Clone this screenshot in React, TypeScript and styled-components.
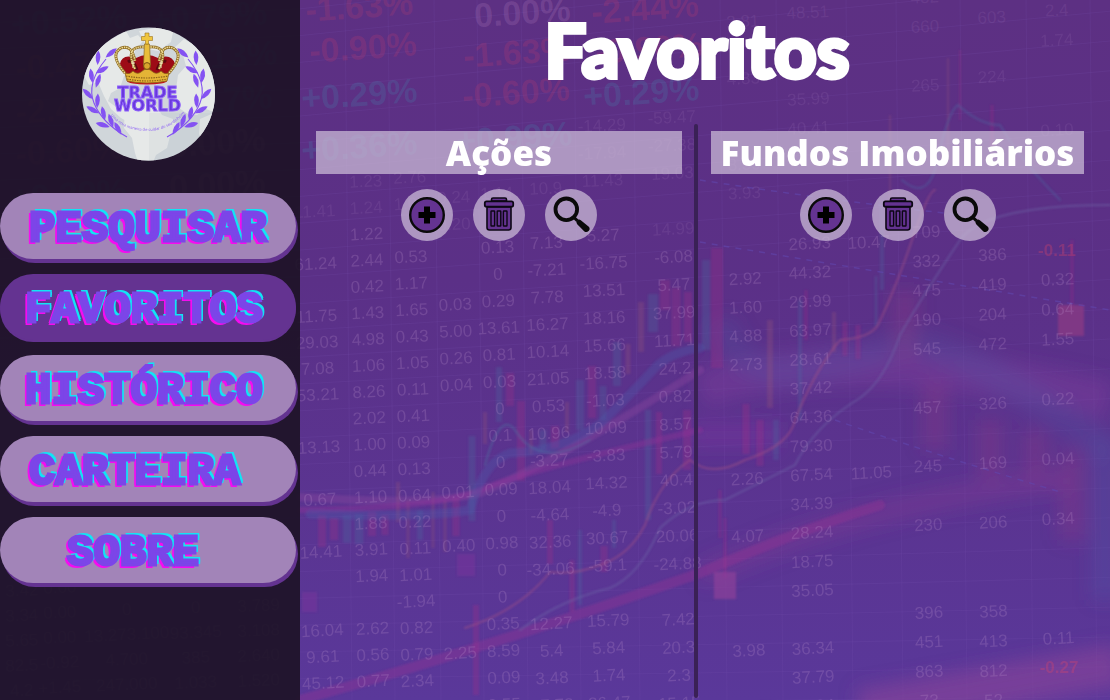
import React from 'react';
import styled, { createGlobalStyle, css } from 'styled-components';

const colors = {
  night: '#22152c',
  violet: '#643391',
  lilac: '#a284b8',
  label: '#7c45e8',
  leaf: '#8452f2',
};

const GlobalStyle = createGlobalStyle`
  *, *::before, *::after { box-sizing: border-box; }
  html, body, #root { min-height: 100%; }
  body {
    margin: 0;
    background: ${colors.night};
    color: #fff;
    font-family: "Open Sans", "Liberation Sans", sans-serif;
  }
`;

const Page = styled.div`
  position: relative;
  isolation: isolate;
  display: flex;
  min-height: 100vh;
  overflow: hidden;
`;

const BackdropSvg = styled.svg`
  position: absolute;
  inset: 0;
  z-index: -1;
  width: 100%;
  height: 100%;
  font-family: "Liberation Sans", Arial, sans-serif;
`;

const Sidebar = styled.aside`
  flex: 0 0 300px;
  display: flex;
  flex-direction: column;
  align-items: flex-start;
  padding-top: 27px;
  background: rgba(28, 18, 35, 0.9);
`;

const LogoLink = styled.a`
  align-self: center;
  display: block;
  height: 134px;
  margin-right: 3px;
`;

const Nav = styled.nav`
  display: flex;
  flex-direction: column;
  gap: 15px;
  width: 296px;
  margin-top: 32px;
`;

const NavButton = styled.button<{ $active?: boolean; $indent?: number }>`
  height: 66px;
  padding: 6px 0 0 ${({ $indent = 29 }) => $indent}px;
  border: 0;
  border-radius: 33px;
  background: ${colors.lilac};
  box-shadow: 2px 4px 0 ${colors.violet};
  color: ${colors.label};
  font: 700 44px/60px "Liberation Mono", monospace;
  text-align: left;
  white-space: nowrap;
  cursor: pointer;
  -webkit-text-stroke: 3px ${colors.label};
  text-shadow: 3px -3px 0 #12e4f5, 3px -1px 0 #12e4f5, -3px 3px 0 #f50cf0, -3px 1px 0 #f50cf0;

  ${({ $active }) =>
    $active &&
    css`
      background: ${colors.violet};
      box-shadow: 0 2px 0 ${colors.violet};
    `}
`;

const Main = styled.main`
  flex: 1;
  min-width: 0;
  display: flex;
  flex-direction: column;
`;

const Title = styled.h1`
  margin: 0;
  padding: 0 16px 0 0;
  height: 124px;
  color: #fff;
  font: 900 74px/100px "Lato", sans-serif;
  text-align: center;
  -webkit-text-stroke: 4px #fff;
`;

const Columns = styled.div`
  flex: 1;
  display: grid;
  grid-template-columns: 394fr 4px 412fr;
  padding-bottom: 2px;
`;

const Divider = styled.div`
  border-radius: 2px;
  background: #3a2156;
`;

const Panel = styled.section<{ $side: 'left' | 'right' }>`
  padding: ${({ $side }) => ($side === 'left' ? '7px 12px 0 16px' : '7px 26px 0 13px')};
`;

const PanelTitle = styled.h2`
  margin: 0;
  height: 43px;
  background: rgba(205, 190, 216, 0.72);
  color: #fff;
  font: 800 35px/43px "Open Sans", sans-serif;
  text-align: center;
  white-space: nowrap;
`;

const Actions = styled.div`
  display: flex;
  justify-content: center;
  gap: 20px;
  margin-top: 15px;
`;

const ActionButton = styled.button`
  display: grid;
  place-items: center;
  width: 52px;
  height: 52px;
  padding: 0;
  border: 0;
  border-radius: 50%;
  background: rgba(205, 190, 216, 0.72);
  cursor: pointer;
`;

const Icon = styled.svg`
  width: 40px;
  height: 40px;
`;

const PlusIcon = () => (
  <Icon viewBox="0 0 40 40" aria-hidden="true">
    <circle cx="20" cy="20" r="16.8" fill={colors.violet} stroke="#0a0a0a" strokeWidth="2.4" />
    <path d="M17 11.5h6V17h5.5v6H23v5.5h-6V23h-5.5v-6H17z" fill="#000" />
  </Icon>
);

const TrashIcon = () => (
  <Icon viewBox="0 0 40 40" aria-hidden="true">
    <g fill={colors.violet} stroke="#0c0714" strokeLinejoin="round">
      <path d="M12.5 6V4.4Q12.5 3 14 3h12q1.5 0 1.5 1.4V6z" strokeWidth="1.6" />
      <path d="M8 12h24v20.5Q32 35 29.5 35h-19Q8 35 8 32.5z" strokeWidth="1.6" />
      <rect x="5.8" y="6.3" width="28.4" height="5.4" rx="1.8" strokeWidth="1.8" />
      <g strokeWidth="1.4">
        <rect x="12" y="16" width="3.6" height="15" rx=".6" />
        <rect x="18.2" y="16" width="3.6" height="15" rx=".6" />
        <rect x="24.4" y="16" width="3.6" height="15" rx=".6" />
      </g>
    </g>
  </Icon>
);

const SearchIcon = () => (
  <Icon viewBox="0 0 40 40" aria-hidden="true">
    <circle cx="15.3" cy="14.3" r="10.8" fill="none" stroke="#0a0a0a" strokeWidth="3.8" />
    <path d="M22.5 22l4 3.8" stroke="#0a0a0a" strokeWidth="3" />
    <path d="M26.2 25.6q-1.6 2 0 3.6l7.2 7.2q2.2 1.6 4.2-.4t.2-4.2l-8-6.6q-2-1.4-3.6.4z" fill="#0a0a0a" />
  </Icon>
);

const leaves: [number, number, number][] = [
  [16, 31, 3], [29, 26, 50], [20, 43, 62], [9.5, 49, -8], [16, 54, 18], [6, 67, -45],
  [15.5, 74, 3], [11, 83, -62], [21.5, 86.5, -12], [21, 98, -74], [29, 94, -18], [36, 101.5, -28],
];

const Laurel = () => (
  <g fill={colors.leaf}>
    <path d="M24 32Q4 56 12 76T45 110" fill="none" stroke={colors.leaf} strokeWidth="1.1" />
    {leaves.map(([x, y, r]) => (
      <path key={`${x}-${y}`} d="M0-7.5Q4.8-1 0 7Q-4.8-1 0-7.5z" transform={`translate(${x} ${y}) rotate(${r})`} />
    ))}
  </g>
);

const Logo = () => (
  <svg width="134" height="134" viewBox="0 0 134 134" role="img" aria-label="Trade World">
    <defs>
      <clipPath id="globe"><circle cx="66.5" cy="67" r="66.5" /></clipPath>
      <path id="motto" d="M22 80Q37 104 65 104Q93 104 109 77" />
    </defs>
    <g clipPath="url(#globe)">
      <rect width="134" height="134" fill="#d0d6da" />
      <g fill="#e6e9e8">
        <path d="M0 45Q10 24 30 12L44 4l4 7 8-3 5 6-7 8-4 10 4 8-12 9-4 12-9 5-3 8 8 6 5-5 4 6 1 9 7 1-3 5-9-5-10-9-7-13-6-14-9 3z" />
        <path d="M43 78l15-3 17 5 5 8 11 4 5 7-8 10-3 12-11 7-4 10-3 8-9-5-5-15-3-15-8-10z" />
        <path d="M57 4l20-4 14 5-2 10-13 9-10-2-5-9z" />
        <path d="M96 48l8-9-3-11-9-7 10-9 14 8 18 18v48l-10-4-9 6-9-1-9-6-4-11z" />
        <path d="M118 92l16-7v30l-12 2-5-10z" />
      </g>
      <path d="M67 86h67v48H67z" fill="#b7bec6" opacity=".16" />
    </g>
    <Laurel />
    <g transform="translate(130 0) scale(-1 1)"><Laurel /></g>

    <path d="M38 37Q40 26 54 31Q65 25 76 31Q90 26 93 37L87 48H44z" fill="#9d0b16" />
    <path d="M46 35Q51 31 55 43M84 35Q79 31 75 43" fill="none" stroke="#5c0710" strokeWidth="3" />
    <ellipse cx="65" cy="54" rx="20" ry="3.5" fill="#c5131d" />
    <g fill="none" stroke="#8d6a22" strokeWidth="2.8">
      <path d="M43 46Q27 28 39 21Q50 17 53 34M87 46Q103 28 91 21Q80 17 77 34" />
      <path d="M53 42Q42 19 62 20M77 42Q88 19 68 20" />
    </g>
    <g fill="none" stroke="#ecd98f" strokeWidth="1.5" strokeDasharray="1.5 .8">
      <path d="M43 46Q27 28 39 21Q50 17 53 34M87 46Q103 28 91 21Q80 17 77 34" />
      <path d="M53 42Q42 19 62 20M77 42Q88 19 68 20" />
    </g>
    <path d="M62.5 17h5l1 21-3.5 5-3.5-5z" fill="#e9bd3a" stroke="#8d6a22" strokeWidth=".7" />
    <path d="M63.5 17v-3.5h-4v-4h3.5V6h4v3.5h3.5v4h-4V17z" fill="#f0c63e" stroke="#9a7220" strokeWidth=".6" />
    <path d="M43 46q5 2 8-2 4 4 8 1 3-3 6-3t6 3q4 3 8-1 3 4 8 2l-2 8q-20 4-40 0z" fill="#e4b436" stroke="#8a6319" strokeWidth=".8" />
    <path d="M45 52q20 4 40 0M44 49q21 4 42 0" fill="none" stroke="#8a6319" strokeWidth="1.2" strokeDasharray="1.5 1" />
    <circle cx="65" cy="39" r="3.4" fill="#d9a62d" stroke="#765111" />
    <path d="M51 33v8m-2-5h4M79 33v8m-2-5h4" stroke="#f3e7c2" strokeWidth="1" />

    <g fill="#6938dc" stroke="#8e60fb" strokeWidth="1" fontFamily="DejaVu Sans, sans-serif" fontSize="16" fontWeight="700" textAnchor="middle">
      <text x="65.5" y="71">TRADE</text>
      <text x="65.5" y="84">WORLD</text>
    </g>
    <text fill="#8a5cf5" fontFamily="Open Sans, sans-serif" fontSize="4">
      <textPath href="#motto" startOffset="50%" textAnchor="middle">Uma nova maneira de cuidar do seu dinheiro</textPath>
    </text>
  </svg>
);

type Column = { x: number; y: number; step: number; drift?: number; cells: string };

/* Cells are comma separated, an empty cell leaves a gap in the column. */
const quoteColumns: Column[] = [
  { x: 315, y: 211, step: 26.2, drift: 9, cells: '11.41,,61.24,,11.75,29.03,7.08,53.21,,13.13,,0.67,,14.41,,,16.04,9.61,45.12' },
  { x: 366, y: 181, step: 26.3, drift: 8, cells: '1.23,1.24,1.22,2.44,0.42,1.43,4.98,1.06,8.26,2.02,1.00,0.44,1.10,1.88,3.91,1.94,,2.62,0.56,0.77' },
  { x: 410, y: 177, step: 26.5, drift: 8, cells: '2.76,1.02,,0.53,1.17,1.65,0.43,1.05,0.11,0.41,0.09,0.13,0.64,0.22,0.11,1.01,-1.94,0.82,0.79,2.34' },
  { x: 454, y: 197, step: 26.8, drift: 7, cells: '0.24,0.20,,,0.03,5.00,0.26,0.04,,,,0.01,,0.40,,,,2.25' },
  { x: 497, y: 193, step: 26.9, drift: 8, cells: '1.14,,0.13,0,0.29,13.61,0.81,0.03,0,0.1,0,0.09,0,0.98,0,0,0.35,8.59,0.09,0.55' },
  { x: 546, y: 188, step: 27.2, drift: 7, cells: '10.9,,7.13,-7.21,7.78,16.27,10.14,21.05,0.53,10.96,-3.27,18.04,-4.64,32.36,-34.06,,12.27,5.4,3.48,37.72' },
  { x: 602, y: 125, step: 27.5, drift: 8, cells: '-14.29,-17.94,11.43,,5.27,-16.75,13.51,18.16,15.66,18.58,-1.03,10.09,-3.83,14.32,-4.9,30.67,-59.1,,15.79,5.84,1.74,26.47' },
  { x: 672, y: 117, step: 27.9, drift: 8, cells: '-59.47,-27.38,19.03,,14.99,-6.08,5.47,37.99,11.71,24.2,0.82,8.57,5.79,40.4,-3.02,20.06,-24.88,,7.42,20.3,2.3,15.15' },
  { x: 743, y: 21, step: 28.6, drift: 7, cells: '2.81,,4.83,,,8.59,3.93,,,2.92,1.60,4.88,2.73,,,,2.26,,4.07,,,,3.98,,2.55' },
  { x: 808, y: 12, step: 28.9, drift: 6, cells: '48.51,,,35.99,40.41,,,,26.93,44.32,29.99,63.97,28.61,37.42,64.36,79.30,67.54,34.39,28.24,18.75,35.05,,36.34,37.79,59.84' },
  { x: 869, y: 242, step: 28.8, drift: 3, cells: '10.47,,,,,,,,11.05' },
  { x: 925, y: -3, step: 29.3, drift: 5, cells: '452,660,,265,,,,,709,332,475,190,545,,457,,245,,230,,,396,451,863,73' },
  { x: 992, y: 17, step: 29.7, drift: 2, cells: '603,,224,,,,,,386,419,204,472,,326,,169,,206,,,358,413,812,52' },
  { x: 1057, y: 10, step: 29.9, drift: 2, cells: '2.4,1.74,,,0.10,,,,,0.32,0.64,1.55,,0.22,,0.04,,0.34,,,,0.11' },
  { x: 22, y: 590, step: 25, cells: '3.42,3.34,5.65,82.5,4.2' },
  { x: 60, y: 587, step: 25, cells: '0.00,0.00,0.00,-0.92,+1.45' },
  { x: 127, y: 609, step: 25, cells: '0,13.273.100,4.700,247.000' },
  { x: 196, y: 607, step: 25, cells: '0,93.345,385,1.033' },
  { x: 259, y: 605, step: 25, cells: '3.789,3.108,2.640,1.520' },
];

const red = '#e04468';
const teal = '#3ba7c0';
const pale = '#d8a0d8';

const tickers: [number, number, string, string][] = [
  [70, 20, '+0.52%', teal], [210, 16, '+0.79%', teal], [70, 64, '-0.47%', red], [220, 56, '+0.13%', teal],
  [70, 108, '-2.44%', red], [215, 100, '+0.17%', teal], [70, 150, '-0.60%', red], [218, 142, '0.00%', pale],
  [70, 194, '+0.29%', teal], [218, 184, '0.00%', pale],
  [360, 6, '-1.63%', red], [364, 47, '-0.90%', red], [360, 94, '+0.29%', teal], [360, 146, '+0.36%', teal],
  [523, 12, '0.00%', pale], [518, 52, '-1.63%', red], [517, 92, '-0.60%', red], [515, 137, '+0.99%', teal],
  [646, 8, '-2.44%', red], [650, 48, '-0.90%', red], [642, 92, '+0.29%', teal],
];

/* x, top, height, width, colour */
const candles: [number, number, number, number, string][] = [
  [322, 515, 32, 8, 'r'], [334, 518, 22, 8, 'r'], [347, 515, 28, 8, 'b'], [359, 514, 30, 9, 'b'], [372, 512, 24, 8, 'r'],
  [385, 515, 20, 7, 'r'], [398, 482, 40, 4, 'o'], [408, 500, 58, 3, 'o'], [420, 510, 30, 6, 'b'], [433, 492, 56, 3, 'o'],
  [445, 500, 52, 3, 'o'], [456, 498, 38, 7, 'r'], [472, 436, 85, 7, 'b'], [485, 412, 32, 4, 'o'], [499, 367, 55, 6, 'b'],
  [510, 373, 33, 8, 'r'], [521, 401, 80, 8, 'r'], [531, 430, 24, 3, 'o'], [543, 430, 20, 7, 'b'], [555, 426, 22, 8, 'r'],
  [567, 402, 30, 4, 'o'], [580, 380, 50, 8, 'b'], [592, 366, 52, 8, 'r'], [603, 386, 34, 7, 'b'], [617, 342, 44, 8, 'b'],
  [628, 344, 30, 5, 'o'], [641, 302, 50, 6, 'o'], [653, 294, 38, 10, 'b'], [665, 280, 30, 10, 'r'], [676, 288, 58, 9, 'r'],
  [688, 292, 50, 8, 'r'], [648, 410, 110, 6, 'b'], [659, 412, 62, 6, 'r'], [687, 410, 60, 8, 'r'], [550, 520, 44, 6, 'r'],
  [572, 560, 52, 5, 'r'], [580, 530, 75, 4, 'b'], [614, 520, 28, 4, 'b'], [604, 546, 26, 7, 'r'], [476, 605, 90, 6, 'r'],
  [717, 248, 120, 12, 'r'], [706, 260, 90, 8, 'b'], [770, 320, 88, 6, 'o'], [746, 404, 50, 7, 'r'], [760, 420, 46, 7, 'r'],
  [776, 420, 40, 6, 'b'], [800, 300, 120, 4, 'b'], [806, 290, 50, 3, 'r'], [834, 312, 40, 4, 'o'], [845, 322, 34, 5, 'r'],
  [858, 325, 34, 5, 'r'], [876, 276, 50, 3, 'b'], [882, 200, 90, 4, 'b'], [948, 58, 110, 2, 'o'], [960, 50, 70, 2, 'r'],
  [890, 115, 90, 2, 'o'], [992, 105, 45, 3, 'r'], [720, 490, 48, 3, 'r'], [725, 518, 60, 3, 'r'], [1072, 240, 70, 3, 'r'],
];
const candleFill: Record<string, string> = { r: '#a32f88', b: '#4a6ba0', o: '#98557c' };

const rowLines = Array.from({ length: 29 }, (_, i) => i);

const Backdrop = () => (
  <BackdropSvg viewBox="0 0 1110 700" preserveAspectRatio="xMidYMin slice" aria-hidden="true">
    <defs>
      <linearGradient id="wash" x1="0" y1="0" x2="0" y2="1">
        <stop offset="0" stopColor="#5d3083" />
        <stop offset=".4" stopColor="#5b3087" />
        <stop offset="1" stopColor="#5a389a" />
      </linearGradient>
      <filter id="soft" x="-20%" y="-20%" width="140%" height="140%"><feGaussianBlur stdDeviation="1.3" /></filter>
      <filter id="haze" x="-50%" y="-50%" width="200%" height="200%"><feGaussianBlur stdDeviation="9" /></filter>
    </defs>
    <rect width="1110" height="700" fill="url(#wash)" />

    <g fill="none" stroke="#7f55b4" strokeOpacity=".16">
      {rowLines.map((i) => (
        <path key={i} d={`M0 ${i * 26.3 - 4}L300 ${i * 26.5 - 18 + i * 0.3}L1110 ${i * 28.6 - 108 + i * 1.2}`} />
      ))}
      {[345, 388, 434, 477, 521, 574, 633, 720, 776, 846, 896, 960, 1026, 1090].map((x) => (
        <path key={x} d={`M${x} 0l7 700`} />
      ))}
    </g>

    <g filter="url(#haze)" fill="none">
      <path d="M700 390Q850 340 1110 400" stroke="#81409d" strokeWidth="38" opacity=".4" />
      <path d="M720 320Q740 380 800 370T900 345T1110 450" stroke="#4e5aa8" strokeWidth="30" opacity=".22" />
      <path d="M690 435h90" stroke="#8431a4" strokeWidth="26" opacity=".35" />
      <path d="M905 290v70M935 380v70M990 420v60M1035 430v50M1072 450v90" stroke="#8f3b88" strokeWidth="24" opacity=".35" />
      <path d="M700 575Q870 500 1070 480" stroke="#8c3893" strokeWidth="22" opacity=".35" />
      <path d="M860 710L1120 665" stroke="#94479a" strokeWidth="42" opacity=".5" />
      <path d="M1105 440v160" stroke="#4e5eaa" strokeWidth="26" opacity=".3" />
    </g>

    <g filter="url(#soft)">
      <g opacity=".3">
        {candles.map(([x, y, h, w, c], i) => (
          <rect key={i} x={x - w / 2} y={y} width={w} height={h} fill={candleFill[c]} />
        ))}
      </g>
      <g fill="none" strokeLinecap="round">
        <path d="M300 700Q480 650 700 573Q800 530 880 505" stroke="#9a3593" strokeWidth="10" opacity=".36" />
        <path d="M300 497Q430 506 480 493Q560 460 700 370" stroke="#9248a2" strokeWidth="8" opacity=".34" />
        <path d="M300 510Q440 508 480 490T700 430" stroke="#973298" strokeWidth="6" opacity=".36" />
        <path d="M310 514Q430 518 470 510Q485 460 510 453Q560 452 600 424Q630 395 655 368Q670 352 700 348" stroke="#4b5ca9" strokeWidth="9" opacity=".34" />
        <path d="M465 628Q520 610 550 572Q575 575 600 565Q630 555 645 525Q660 480 690 460Q712 478 745 460Q790 445 795 420Q815 370 840 340Q870 338 878 325Q895 290 912 240T935 190" stroke="#a55286" strokeWidth="2" opacity=".5" />
        <path d="M520 630Q560 600 610 588Q640 575 660 528Q690 500 725 500L795 465Q815 425 860 398Q885 380 900 335Q920 300 960 240Q985 205 1110 205" stroke="#6d65a8" strokeWidth="2" opacity=".5" />
        <path d="M485 465Q500 410 515 430Q540 470 590 440" stroke="#4c7da4" strokeWidth="2" opacity=".4" />
        <path d="M902 180Q925 200 935 170Q948 110 958 105Q980 125 1000 125Q1020 160 1060 200" stroke="#4c6da4" strokeWidth="2" opacity=".4" />
      </g>
      <rect x="714" y="572" width="22" height="27" fill="#91409a" opacity=".65" />
      <rect x="1058" y="305" width="26" height="31" fill="#8f3a83" opacity=".7" />
      <rect x="457" y="554" width="18" height="22" fill="#7a2f9c" opacity=".5" />
      <rect x="302" y="592" width="15" height="20" fill="#7a2f9c" opacity=".5" />
    </g>
    <path d="M700 242Q880 272 1110 310M835 420Q920 450 1060 492M700 180Q800 196 960 215" fill="none" stroke="#6046ad" strokeWidth="1.5" strokeDasharray="6 6" opacity=".6" />

    <g fontSize="17" fill="#c49ad2" fillOpacity=".22" textAnchor="middle">
      {quoteColumns.flatMap(({ x, y, step, drift = 0, cells }, c) => {
        const items = cells.split(',');
        return items.map((cell, i) =>
          cell ? (
            <text
              key={`${c}-${i}`}
              transform={`translate(${x + (drift * i) / items.length} ${y + i * step + 6}) rotate(-3)`}
              opacity={y + i * step < 230 ? 0.5 : 1}
            >
              {cell}
            </text>
          ) : null,
        );
      })}
    </g>
    <g fontSize="34" fontWeight="700" textAnchor="middle" fillOpacity=".17">
      {tickers.map(([x, y, value, fill], i) => (
        <text key={i} fill={fill} transform={`translate(${x} ${y + 12}) rotate(-4)`}>{value}</text>
      ))}
    </g>
    <g fontSize="17" fontWeight="700" textAnchor="middle" fill={red} fillOpacity=".3">
      <text x="1057" y="256">-0.11</text>
      <text x="1059" y="673">-0.27</text>
    </g>
  </BackdropSvg>
);

const navItems: { label: string; active?: boolean; indent?: number }[] = [
  { label: 'PESQUISAR' },
  { label: 'FAVORITOS', active: true, indent: 25 },
  { label: 'HISTÓRICO', indent: 25 },
  { label: 'CARTEIRA' },
  { label: 'SOBRE', indent: 67 },
];

const FavoritesPanel = ({ title, side }: { title: string; side: 'left' | 'right' }) => (
  <Panel $side={side} aria-label={title}>
    <PanelTitle>{title}</PanelTitle>
    <Actions>
      <ActionButton type="button" aria-label="Adicionar"><PlusIcon /></ActionButton>
      <ActionButton type="button" aria-label="Excluir"><TrashIcon /></ActionButton>
      <ActionButton type="button" aria-label="Buscar"><SearchIcon /></ActionButton>
    </Actions>
  </Panel>
);

export default function App() {
  return (
    <>
      <GlobalStyle />
      <Page>
        <Backdrop />
        <Sidebar>
          <LogoLink href="#inicio"><Logo /></LogoLink>
          <Nav aria-label="Principal">
            {navItems.map(({ label, active, indent }) => (
              <NavButton key={label} type="button" $active={active} $indent={indent} aria-current={active ? 'page' : undefined}>
                {label}
              </NavButton>
            ))}
          </Nav>
        </Sidebar>
        <Main>
          <Title>Favoritos</Title>
          <Columns>
            <FavoritesPanel title="Ações" side="left" />
            <Divider />
            <FavoritesPanel title="Fundos Imobiliários" side="right" />
          </Columns>
        </Main>
      </Page>
    </>
  );
}
